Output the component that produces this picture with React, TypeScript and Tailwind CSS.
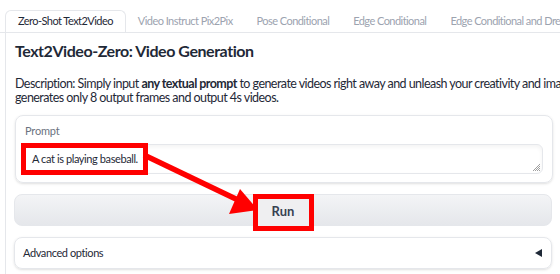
import React from 'react';

const TABS = ['Zero-Shot Text2Video', 'Video Instruct Pix2Pix', 'Pose Conditional', 'Edge Conditional', 'Edge Conditional and DreamBooth Specialized'];

const App: React.FC = () => {
  return (
    <div className="relative w-[560px] h-[274px] overflow-hidden bg-white text-[#1f2937]" style={{ fontFamily: 'Lato, "Open Sans", sans-serif' }}>
      {/* Tabs */}
      <div className="flex pt-[10px] pl-[5px] border-b border-[#e5e7eb] whitespace-nowrap">
        {TABS.map((t, i) => (
          <div
            key={t}
            className={`px-3 h-[22px] flex items-center text-[11px] tracking-[-0.55px] ${i === 0 ? 'border border-b-0 border-[#e5e7eb] rounded-t-md bg-white text-[#1f2937] -mb-px' : 'text-[#9ca3af]'}`}
          >
            {t}
          </div>
        ))}
      </div>

      {/* Panel */}
      <div className="ml-[5px] border-l border-[#e5e7eb] pl-[9px] pr-2 h-[250px]">
        <h1 className="pt-[8px] text-[16px] font-bold leading-[20px] tracking-[-0.45px]">Text2Video-Zero: Video Generation</h1>
        <div className="mt-[16px] text-[12.5px] leading-[13.5px] tracking-[-0.55px] whitespace-nowrap">
          <p>
            Description: Simply input <b>any textual prompt</b> to generate videos right away and unleash your creativity and imagination!
          </p>
          <p>generates only 8 output frames and output 4s videos.</p>
        </div>

        {/* Prompt */}
        <div className="mt-[11px] w-[538px] border border-[#e5e7eb] rounded-lg px-[9px] pt-[8px] pb-[8px] shadow-sm">
          <div className="text-[11px] text-[#6b7280] leading-[14px] tracking-[-0.2px]">Prompt</div>
          <div className="mt-[6px] relative h-[30px] border border-[#e5e7eb] rounded-md shadow-inner flex items-center text-[11px] tracking-[-0.4px]">
            <span className="outline-[5px] outline-solid outline-[#ff0000] bg-white h-[22px] pl-[6px] pr-[5px] flex items-center whitespace-nowrap">A cat is playing baseball.</span>
            <svg className="absolute right-[1px] bottom-[1px]" width="10" height="10" viewBox="0 0 10 10">
              <path d="M9 2L2 9M9 4L4 9M9 6L6 9M9 8L8 9" stroke="#888" strokeWidth="0.8" />
            </svg>
          </div>
        </div>

        {/* Run */}
        <div className="mt-[11px] w-[538px] -ml-px h-[32px] rounded-lg border border-[#e5e7eb] bg-gradient-to-b from-[#f3f4f6] to-[#e5e7eb] flex items-center justify-center">
          <span className="outline-[5px] outline-solid outline-[#ff0000] bg-[#efeff1] w-[51px] h-[27px] mt-[4px] flex items-center justify-center text-[13px] font-bold text-[#374151]">Run</span>
        </div>

        {/* Advanced options */}
        <div className="mt-[11px] w-[538px] -ml-px h-[32px] rounded-lg border border-[#e5e7eb] flex items-center justify-between pl-[8px] pr-[9px] text-[11px] tracking-[-0.4px] shadow-sm">
          <span>Advanced options</span>
          <svg width="7" height="8" viewBox="0 0 7 8">
            <polygon points="0,4 7,0 7,8" fill="#1f2937" />
          </svg>
        </div>
      </div>

      {/* Annotation arrow */}
      <svg className="absolute left-0 top-0 pointer-events-none" width="560" height="274">
        <line x1="144" y1="155" x2="238" y2="200" stroke="#ff0000" strokeWidth="5.5" />
        <polygon points="258,210 240,189 229,214" fill="#ff0000" />
      </svg>
    </div>
  );
};

export default App;
